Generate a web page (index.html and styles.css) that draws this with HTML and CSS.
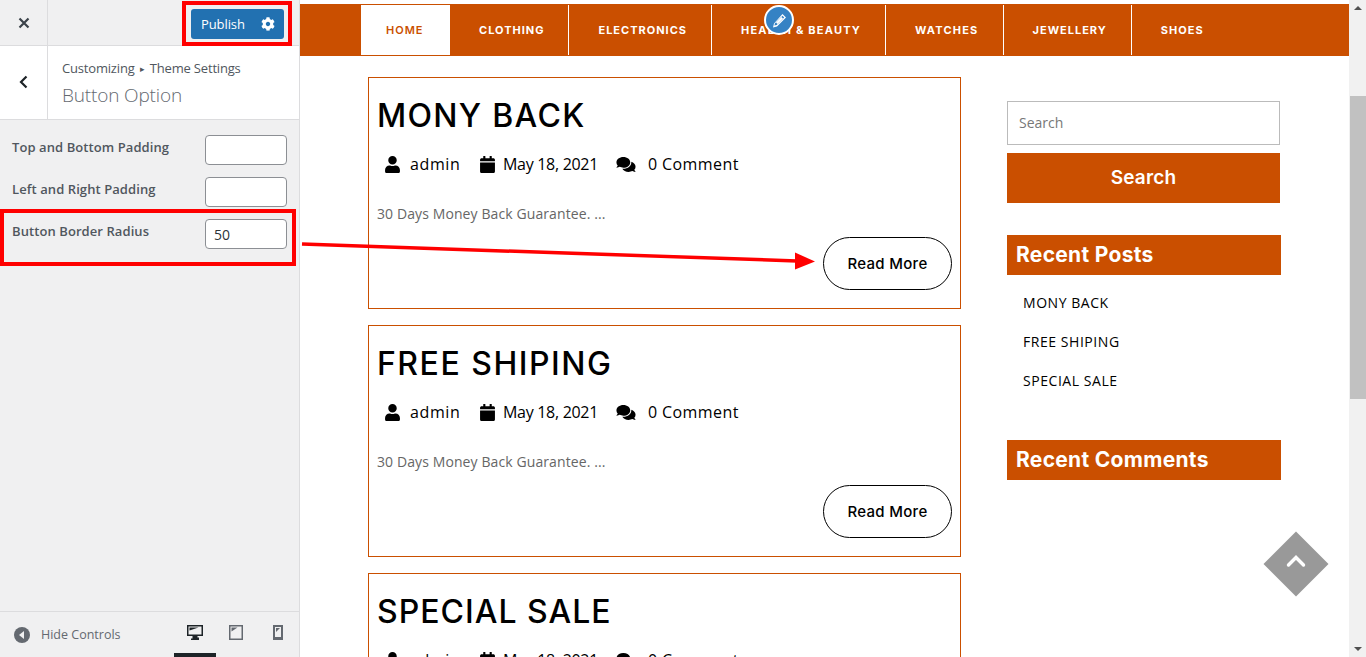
FILE: index.html
```html
<!DOCTYPE html>
<html lang="en">
<head>
  <meta charset="UTF-8" />
  <title>Customizing - Button Option</title>
  <link rel="stylesheet" href="styles.css">
</head>
<body>

<svg class="sprites" width="0" height="0">
  <symbol id="i-user" viewBox="0 0 448 512"><path d="M224 256c70.700 0 128-57.300 128-128S294.700 0 224 0 96 57.300 96 128s57.300 128 128 128zm89.600 32h-16.700c-22.200 10.200-46.900 16-72.900 16s-50.600-5.800-72.900-16h-16.700C60.200 288 0 348.200 0 422.400V464c0 26.500 21.500 48 48 48h352c26.500 0 48-21.500 48-48v-41.600c0-74.200-60.200-134.400-134.400-134.400z"/></symbol>
  <symbol id="i-cal" viewBox="0 0 448 512"><path d="M12 192h424c6.600 0 12 5.400 12 12v260c0 26.500-21.500 48-48 48H48c-26.500 0-48-21.500-48-48V204c0-6.600 5.400-12 12-12zm436-44v-36c0-26.500-21.500-48-48-48h-48V12c0-6.600-5.400-12-12-12h-40c-6.600 0-12 5.400-12 12v52H160V12c0-6.600-5.400-12-12-12h-40c-6.600 0-12 5.400-12 12v52H48C21.500 64 0 85.500 0 112v36c0 6.600 5.400 12 12 12h424c6.600 0 12-5.400 12-12z"/></symbol>
  <symbol id="i-comments" viewBox="0 0 576 512"><path d="M416 192c0-88.400-93.100-160-208-160S0 103.600 0 192c0 34.300 14.100 65.900 38 92-13.400 30.200-35.500 54.200-35.800 54.500-2.200 2.300-2.800 5.700-1.500 8.700S4.800 352 8 352c36.600 0 66.900-12.300 88.700-25 32.200 15.700 70.300 25 111.300 25 114.900 0 208-71.600 208-160zm122 220c23.900-26 38-57.700 38-92 0-66.900-53.500-124.200-129.300-148.100.9 6.600 1.300 13.300 1.300 20.100 0 105.900-107.700 192-240 192-10.800 0-21.300-.8-31.700-1.900C207.800 439.600 281.800 480 368 480c41 0 79.100-9.200 111.300-25 21.800 12.700 52.100 25 88.700 25 3.200 0 6.100-1.900 7.300-4.800 1.300-2.900.7-6.300-1.500-8.700-.3-.3-22.400-24.200-35.800-54.500z"/></symbol>
</svg>

<div class="app">

  <aside class="panel">
    <div class="panel-top">
      <div class="close-cell">
        <svg width="12" height="12" viewBox="0 0 12 12"><path d="M1.500 1.500l9 9M10.500 1.500l-9 9" stroke="#3c434a" stroke-width="2.200" fill="none"/></svg>
      </div>
      <div class="publish">
        <span class="publish-label">Publish</span>
        <svg class="gear" width="14" height="14" viewBox="0 0 512 512"><path fill="#fff" d="M487.400 315.700l-42.600-24.600c4.300-23.200 4.300-47 0-70.200l42.600-24.600c4.900-2.800 7.100-8.600 5.500-14-11.100-35.600-30-67.800-54.700-94.600-3.800-4.100-10-5.100-14.800-2.300L380.800 110c-17.900-15.400-38.500-27.300-60.800-35.100V25.800c0-5.600-3.900-10.500-9.400-11.700-36.700-8.200-74.300-7.800-109.200 0-5.500 1.200-9.400 6.100-9.400 11.700V75c-22.200 7.900-42.800 19.800-60.800 35.100L88.700 85.500c-4.900-2.800-11-1.900-14.800 2.300-24.700 26.700-43.600 58.900-54.700 94.600-1.700 5.400.6 11.200 5.500 14L67.300 221c-4.300 23.200-4.300 47 0 70.200l-42.600 24.600c-4.900 2.800-7.100 8.600-5.500 14 11.100 35.600 30 67.800 54.700 94.600 3.800 4.100 10 5.100 14.800 2.300l42.600-24.600c17.900 15.400 38.500 27.300 60.800 35.100v49.200c0 5.600 3.900 10.500 9.400 11.700 36.700 8.200 74.300 7.800 109.200 0 5.500-1.200 9.400-6.100 9.400-11.700v-49.200c22.200-7.900 42.800-19.800 60.800-35.100l42.600 24.600c4.900 2.800 11 1.900 14.800-2.300 24.700-26.700 43.600-58.900 54.700-94.600 1.500-5.500-.7-11.300-5.600-14.100zM256 336c-44.100 0-80-35.900-80-80s35.900-80 80-80 80 35.900 80 80-35.900 80-80 80z"/></svg>
      </div>
    </div>

    <div class="section-head">
      <div class="back-cell">
        <svg width="9" height="14" viewBox="0 0 9 14"><path d="M7.500 1.500L2 7l5.500 5.500" stroke="#1d2327" stroke-width="2.200" fill="none"/></svg>
      </div>
      <div class="section-title">
        <div class="crumbs">Customizing <span class="crumb-sep">&#9656;</span> Theme Settings</div>
        <div class="section-name">Button Option</div>
      </div>
    </div>

    <div class="controls">
      <div class="control">
        <span class="control-label">Top and Bottom Padding</span>
        <input class="control-input" type="text" />
      </div>
      <div class="control">
        <span class="control-label">Left and Right Padding</span>
        <input class="control-input" type="text" />
      </div>
      <div class="control">
        <span class="control-label">Button Border Radius</span>
        <input class="control-input" type="text" value="50" />
      </div>
    </div>

    <div class="panel-foot">
      <svg class="hide-icon" width="16" height="16" viewBox="0 0 16 16"><circle cx="8" cy="8" r="8" fill="#646970"/><path d="M10 4v8L5 8z" fill="#f0f0f1"/></svg>
      <span class="hide-label">Hide Controls</span>
      <div class="devices">
        <div class="device device-active">
          <svg width="16" height="15" viewBox="0 0 16 15"><path fill="#1d2327" fill-rule="evenodd" d="M0 0h16v11h-5.500v1.500H12V15H4v-1.500h1.500V11H0zM1.500 1.500v8h13v-8z"/><path fill="#1d2327" d="M2.500 2.500h9L2.500 5.500z"/></svg>
        </div>
        <div class="device">
          <svg width="14" height="15" viewBox="0 0 14 15"><path fill="#646970" fill-rule="evenodd" d="M0 0h14v15H0zM1.500 1.500v12h11v-12z"/><path fill="#646970" d="M2.500 2.500h6l-6 4z"/></svg>
        </div>
        <div class="device">
          <svg width="10" height="15" viewBox="0 0 10 15"><path fill="#646970" fill-rule="evenodd" d="M0 0h10v15H0zM2 2v10h6V2z"/><path fill="#646970" d="M3 3h4L3 7z"/></svg>
        </div>
      </div>
    </div>
  </aside>

  <main class="preview">
    <nav class="menu">
      <a class="menu-item menu-home">HOME</a>
      <a class="menu-item">CLOTHING</a>
      <a class="menu-item">ELECTRONICS</a>
      <a class="menu-item menu-long">HEALTH &amp; BEAUTY</a>
      <a class="menu-item menu-long">WATCHES</a>
      <a class="menu-item">JEWELLERY</a>
      <a class="menu-item menu-last">SHOES</a>
    </nav>

    <div class="content">
      <section class="posts">
        <article class="post">
          <h2 class="post-title">MONY BACK</h2>
          <div class="post-meta">
            <span class="meta meta-user"><svg class="meta-icon"><use href="#i-user"/></svg>admin</span>
            <span class="meta meta-date"><svg class="meta-icon"><use href="#i-cal"/></svg>May 18, 2021</span>
            <span class="meta meta-comment"><svg class="meta-icon meta-icon-wide"><use href="#i-comments"/></svg>0 Comment</span>
          </div>
          <p class="post-text">30 Days Money Back Guarantee. ...</p>
          <div class="post-foot"><a class="read-more">Read More</a></div>
        </article>
        <article class="post">
          <h2 class="post-title post-title-wide">FREE SHIPING</h2>
          <div class="post-meta">
            <span class="meta meta-user"><svg class="meta-icon"><use href="#i-user"/></svg>admin</span>
            <span class="meta meta-date"><svg class="meta-icon"><use href="#i-cal"/></svg>May 18, 2021</span>
            <span class="meta meta-comment"><svg class="meta-icon meta-icon-wide"><use href="#i-comments"/></svg>0 Comment</span>
          </div>
          <p class="post-text">30 Days Money Back Guarantee. ...</p>
          <div class="post-foot"><a class="read-more">Read More</a></div>
        </article>
        <article class="post">
          <h2 class="post-title post-title-tight">SPECIAL SALE</h2>
          <div class="post-meta">
            <span class="meta meta-user"><svg class="meta-icon"><use href="#i-user"/></svg>admin</span>
            <span class="meta meta-date"><svg class="meta-icon"><use href="#i-cal"/></svg>May 18, 2021</span>
            <span class="meta meta-comment"><svg class="meta-icon meta-icon-wide"><use href="#i-comments"/></svg>0 Comment</span>
          </div>
          <p class="post-text">30 Days Money Back Guarantee. ...</p>
          <div class="post-foot"><a class="read-more">Read More</a></div>
        </article>
      </section>

      <section class="widgets">
        <input class="search-input" type="text" placeholder="Search" />
        <button class="search-btn">Search</button>
        <h3 class="widget-title widget-posts">Recent Posts</h3>
        <ul class="recent">
          <li>MONY BACK</li>
          <li>FREE SHIPING</li>
          <li>SPECIAL SALE</li>
        </ul>
        <h3 class="widget-title">Recent Comments</h3>
      </section>
    </div>

    <!-- customizer edit shortcut + back to top float over the page -->
    <div class="edit-shortcut">
      <svg width="15" height="15" viewBox="0 0 15 15"><path fill="#fff" fill-rule="evenodd" d="M10.500 1L14 4.500 5 13.500 1 14.500l1-4zM10.500 2.800L3 10.300l-.6 2.300 2.300-.6 7.500-7.500z"/><path fill="#fff" d="M9.500 4l1.500 1.500-5.500 5.500L4 9.500z"/></svg>
    </div>
    <div class="to-top">
      <svg width="22" height="14" viewBox="0 0 22 14"><path d="M3.500 11l7.500-7.500 7.500 7.500" stroke="#fff" stroke-width="3.400" stroke-linecap="round" fill="none"/></svg>
    </div>
  </main>

  <div class="scrollbar">
    <span class="arrow-up"></span>
    <div class="thumb"></div>
    <span class="arrow-down"></span>
  </div>
</div>

<!-- red annotations drawn on top of the screenshot -->
<div class="mark mark-publish"></div>
<div class="mark mark-radius"></div>
<svg class="mark-arrow" width="530" height="40" viewBox="0 0 530 40">
  <path d="M2 4L497 21" stroke="#f00" stroke-width="3.500" fill="none"/>
  <path d="M495 12.500L515 21.500L495 29.500z" fill="#f00"/>
</svg>

</body>
</html>
```

FILE: styles.css
```css
* {
  box-sizing: border-box;
}

html, body {
  height: 100%;
  margin: 0;
  overflow: hidden;
}

body {
  position: relative;
  font-family: "Open Sans", sans-serif;
  color: #000;
  background: #fff;
}

.sprites {
  position: absolute;
}

.app {
  display: flex;
  height: 657px;
}

/* customizer panel */
.panel {
  width: 300px;
  flex: none;
  display: flex;
  flex-direction: column;
  background: #f0f0f1;
  border-right: 1px solid #dcdcde;
}

.panel-top {
  height: 46px;
  display: flex;
  justify-content: space-between;
  border-bottom: 1px solid #dcdcde;
}

.close-cell {
  width: 48px;
  display: flex;
  align-items: center;
  justify-content: center;
  border-right: 1px solid #dcdcde;
}

.publish {
  width: 93px;
  height: 30px;
  margin: 9px 15px 0 0;
  display: flex;
  align-items: center;
  justify-content: space-between;
  padding: 0 9px 0 10px;
  background: #2271b1;
  border-radius: 3px;
  color: #fff;
  font-size: 13px;
  letter-spacing: -0.100px;
}

.section-head {
  height: 74px;
  display: flex;
  background: #fff;
  border-bottom: 1px solid #dcdcde;
}

.back-cell {
  width: 48px;
  display: flex;
  align-items: center;
  justify-content: center;
  padding-bottom: 2px;
  border-right: 1px solid #dcdcde;
}

.section-title {
  padding: 13px 0 0 14px;
  color: #50575e;
}

.crumbs {
  font-size: 13px;
  line-height: 18px;
  letter-spacing: -0.180px;
}

.crumb-sep {
  font-size: 9px;
  margin: 0 2px;
  vertical-align: 1px;
}

.section-name {
  margin-top: 4px;
  font-size: 19px;
  line-height: 26px;
  font-weight: 300;
  color: #646970;
  letter-spacing: -0.150px;
}

.controls {
  flex: 1;
  padding: 15px 12px 0;
}

.control {
  height: 42px;
  display: flex;
  justify-content: space-between;
}

.control-label {
  padding-top: 3px;
  font-size: 13px;
  font-weight: 600;
  line-height: 18px;
  color: #50575e;
  letter-spacing: 0.080px;
}

.control-input {
  width: 82px;
  height: 30px;
  padding: 0 8px;
  border: 1px solid #8c8f94;
  border-radius: 4px;
  background: #fff;
  font-family: inherit;
  font-size: 14px;
  color: #2c3338;
}

.panel-foot {
  height: 46px;
  position: relative;
  display: flex;
  align-items: center;
  padding: 0 0 0 14px;
  border-top: 1px solid #dcdcde;
}

.hide-label {
  margin-left: 11px;
  font-size: 12.500px;
  color: #646970;
}

.devices {
  margin-left: auto;
  margin-right: 0;
  display: flex;
}

.device {
  width: 42px;
  height: 45px;
  display: flex;
  align-items: center;
  justify-content: center;
  padding-bottom: 5px;
}

.device-active {
  position: relative;
  left: 1px;
  border-bottom: 4px solid #1d2327;
  padding-bottom: 1px;
}

/* site preview */
.preview {
  flex: 1;
  position: relative;
  padding-top: 4px;
  overflow: hidden;
}

.menu {
  height: 52px;
  display: flex;
  padding: 1px 0 1px 61px;
  background: #ca4f00;
}

.menu-item {
  display: flex;
  align-items: center;
  padding: 0 24px 0 29px;
  border-right: 1px solid #fff;
  color: #fff;
  font-family: "Inter", sans-serif;
  font-size: 11px;
  font-weight: 700;
  letter-spacing: 1px;
}

.menu-long {
  letter-spacing: 1.200px;
}

.menu-home {
  width: 89px;
  padding: 0 0 0 25px;
  background: #fff;
  color: #ca4f00;
  border-right: 0;
  font-weight: 600;
}

.menu-last {
  border-right: 0;
}

.content {
  display: flex;
  padding: 21px 0 0 68px;
}

.posts {
  width: 593px;
  flex: none;
  display: flex;
  flex-direction: column;
  gap: 16px;
}

.post {
  height: 232px;
  flex: none;
  padding: 0 8px;
  border: 1px solid #ca4f00;
}

.post-title {
  margin: 18px 0 0;
  font-family: "Inter", sans-serif;
  font-size: 32px;
  line-height: 40px;
  font-weight: 500;
  letter-spacing: 1.300px;
}

.post-title-wide {
  letter-spacing: 1.500px;
}

.post-title-tight {
  letter-spacing: 1px;
}

.post-meta {
  display: flex;
  margin-top: 18px;
  padding-left: 7px;
  font-size: 16px;
  line-height: 20px;
}

.meta {
  display: flex;
  align-items: center;
}

.meta-user {
  width: 95px;
  letter-spacing: 0.600px;
}

.meta-date {
  width: 137px;
  letter-spacing: -0.300px;
}

.meta-comment {
  letter-spacing: 0.400px;
}

.meta-icon {
  width: 17px;
  height: 17px;
  margin-right: 8px;
  fill: #000;
}

.meta-user .meta-icon {
  margin-right: 9px;
}

.meta-date .meta-icon {
  margin-right: 7px;
}

.meta-icon-wide {
  width: 20px;
  margin-right: 12px;
}

.post-text {
  margin: 30px 0 0;
  font-size: 14px;
  line-height: 20px;
  color: #666;
  letter-spacing: 0.100px;
}

.post-foot {
  display: flex;
  justify-content: flex-end;
  margin-top: 13px;
}

.read-more {
  width: 129px;
  height: 53px;
  display: flex;
  align-items: center;
  justify-content: center;
  border: 1px solid #000;
  border-radius: 50px;
  font-family: "Inter", sans-serif;
  font-size: 15px;
  font-weight: 500;
  color: #000;
  letter-spacing: 0.300px;
}

.widgets {
  width: 274px;
  margin-left: 46px;
  padding-top: 24px;
  flex: none;
}

.search-input {
  display: block;
  width: 273px;
  height: 44px;
  padding: 0 11px 2px;
  border: 1px solid #bbb;
  background: #fff;
  font-family: inherit;
  font-size: 14px;
}

.search-input::placeholder {
  color: #777;
}

.search-btn {
  display: block;
  width: 273px;
  height: 50px;
  margin-top: 8px;
  padding-bottom: 2px;
  border: 0;
  background: #ca4f00;
  color: #fff;
  font-family: "Inter", sans-serif;
  font-size: 19px;
  font-weight: 600;
  letter-spacing: 0.200px;
}

.widget-title {
  height: 40px;
  margin: 0;
  padding-left: 9px;
  background: #ca4f00;
  color: #fff;
  font-family: "Inter", sans-serif;
  font-size: 21px;
  font-weight: 700;
  line-height: 40px;
  letter-spacing: 0.300px;
}

.widget-posts {
  margin-top: 32px;
}

.recent {
  list-style: none;
  margin: 0;
  height: 165px;
  padding: 8px 0 0 16px;
  font-size: 14px;
  line-height: 39px;
  letter-spacing: 0.550px;
}

.edit-shortcut {
  position: absolute;
  left: 464px;
  top: 5px;
  width: 30px;
  height: 30px;
  display: flex;
  align-items: center;
  justify-content: center;
  border: 2px solid #fff;
  border-radius: 50%;
  background: #3582c4;
}

.to-top {
  position: absolute;
  left: 973px;
  top: 541px;
  width: 46px;
  height: 46px;
  display: flex;
  align-items: center;
  justify-content: center;
  background: #999;
  transform: rotate(45deg);
}

.to-top svg {
  transform: rotate(-45deg) translateY(-3px);
}

/* page scrollbar */
.scrollbar {
  width: 17px;
  flex: none;
  position: relative;
  background: #f1f1f1;
}

.thumb {
  position: absolute;
  left: 1px;
  right: 0;
  top: 96px;
  height: 303px;
  background: #c1c1c1;
}

.arrow-up,
.arrow-down {
  position: absolute;
  left: 5px;
  width: 0;
  height: 0;
  border-left: 4px solid transparent;
  border-right: 4px solid transparent;
}

.arrow-up {
  top: 6px;
  border-bottom: 4px solid #505050;
}

.arrow-down {
  bottom: 6px;
  border-top: 4px solid #505050;
}

/* annotations */
.mark {
  position: absolute;
  border: 4px solid #f00;
}

.mark-publish {
  left: 182px;
  top: 1px;
  width: 110px;
  height: 45px;
}

.mark-radius {
  left: 0;
  top: 209px;
  width: 296px;
  height: 57px;
}

.mark-arrow {
  position: absolute;
  left: 300px;
  top: 240px;
}
```
